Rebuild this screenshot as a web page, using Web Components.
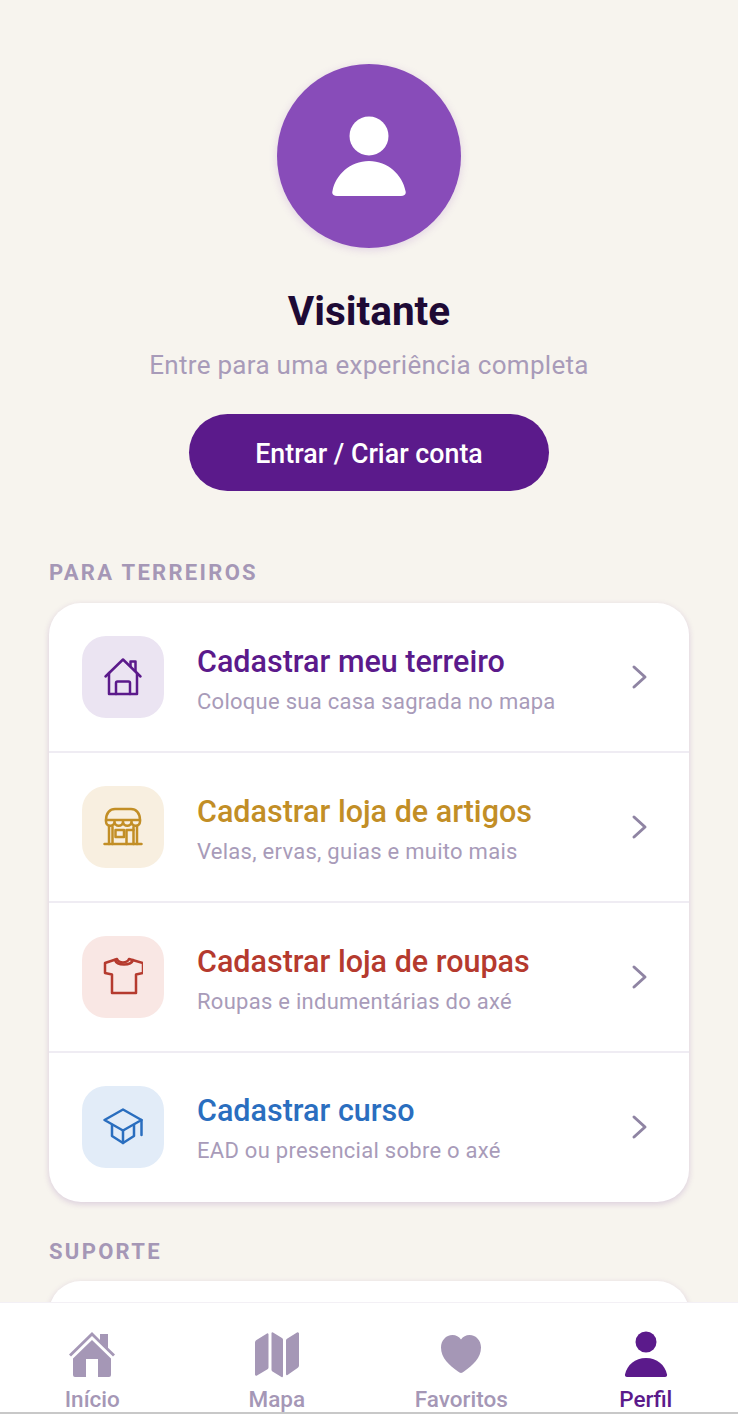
<!DOCTYPE html>
<html lang="pt-BR">
<head>
<meta charset="utf-8">
<title>Perfil</title>
<style>
  html, body { margin: 0; height: 100%; }
  body { font-family: Roboto, "Liberation Sans", sans-serif; background: #f7f4ee; overflow: hidden; }
</style>
</head>
<body>
<profile-screen>
  <profile-hero name="Visitante" hint="Entre para uma experiência completa" action="Entrar / Criar conta"></profile-hero>

  <menu-section label="PARA TERREIROS">
    <menu-row color="#5b1a8b" tint="#ebe4f2" icon="house" title="Cadastrar meu terreiro" sub="Coloque sua casa sagrada no mapa"></menu-row>
    <menu-row color="#c28e26" tint="#f8efe0" icon="store" title="Cadastrar loja de artigos" sub="Velas, ervas, guias e muito mais"></menu-row>
    <menu-row color="#b53a2e" tint="#f9e7e4" icon="shirt" title="Cadastrar loja de roupas" sub="Roupas e indumentárias do axé"></menu-row>
    <menu-row color="#2a6ebf" tint="#e2ecf8" icon="cap" title="Cadastrar curso" sub="EAD ou presencial sobre o axé"></menu-row>
  </menu-section>

  <menu-section label="SUPORTE" class="support">
    <menu-row color="#5b1a8b" tint="#ebe4f2" title="" sub=""></menu-row>
  </menu-section>

  <bottom-nav slot="nav">
    <nav-item icon="home" label="Início"></nav-item>
    <nav-item icon="map" label="Mapa"></nav-item>
    <nav-item icon="heart" label="Favoritos"></nav-item>
    <nav-item icon="person" label="Perfil" active></nav-item>
  </bottom-nav>
</profile-screen>

<script>
const lineIcons = {
  house: `<path d="M2.500 19.500 20 2.500l17.500 17"/><path d="M27.500 9V4.500h5V14"/><path d="M6 16v21h28V16"/><path d="M13 37V26a1.500 1.500 0 0 1 1.500-1.500h11A1.500 1.500 0 0 1 27 26v11"/>`,
  store: `<path d="M1.500 37h37"/><path d="M6 37V19M9.500 37V20M34 37V19M30.500 37V20"/><path d="M3 13C3 6 7 2 12 2h16c5 0 9 4 9 11"/><path d="M3 13v1.500a4.250 4.250 0 0 0 8.500 0 4.250 4.250 0 0 0 8.500 0 4.250 4.250 0 0 0 8.500 0 4.250 4.250 0 0 0 8.500 0V13z"/><path d="M12.500 23h8.500v7h-8.500z"/><path d="M23.500 37V23h7"/>`,
  shirt: `<path d="M14 2 2 6v10l7 1.500V36h24V17.500l7-1.500V6L26 2c-2 4.500-10 4.500-12 0z"/><path d="M12 3c2 6 16 6 18 0"/>`,
  cap: `<path d="M20 2.500 1.500 13 20 23.500 38.500 13z"/><path d="M9 18v11l11 7 11-7V18"/><path d="M20 23.500V36"/><path d="M38.500 13v15"/>`
}

const navIcons = {
  home: `<path d="M24 1 1 23.500l2 2L24 5l21 20.500 2-2-7-6.800V3h-8v6z"/><path d="M24 9 5 27.500V44a2 2 0 0 0 2 2h11V28h12v18h11a2 2 0 0 0 2-2V27.500z"/>`,
  map: `<path d="M2 11.500a3 3 0 0 1 1.500-2.500L14 2.500a1 1 0 0 1 1.500 1v33a2 2 0 0 1-1 1.700L4 44.500a1.300 1.300 0 0 1-2-1.100z"/><path d="M18.500 2a1 1 0 0 1 1.500-.5L29 7a2 2 0 0 1 1 1.700V45a1 1 0 0 1-1.500 1l-9-5.500a2 2 0 0 1-1-1.700z"/><path d="M33 9.500a2 2 0 0 1 1-1.700L44 1.500a1.300 1.300 0 0 1 2 1.100v32a3 3 0 0 1-1.500 2.500L34.500 44a1 1 0 0 1-1.500-1z"/>`,
  heart: `<path d="M24 42c-1 0-2-.6-3-1.400C12 34 4 27 4 16.500 4 9.500 9 4 15.500 4c3.500 0 6.500 1.500 8.500 4.500C26 5.500 29 4 32.500 4 39 4 44 9.500 44 16.500 44 27 36 34 27 40.600c-1 .8-2 1.400-3 1.400z"/>`,
  person: `<circle cx="24" cy="11" r="10.500"/><path d="M5 46c-1.500 0-2.300-1-2-2.500C5 34 13 27 24 27s19 7 21 16.500c.3 1.500-.5 2.500-2 2.500z"/>`
}

class ProfileScreen extends HTMLElement {
  constructor () {
    super()
    this.shadow = this.attachShadow({ mode: 'open' })
  }

  connectedCallback () {
    this.shadow.innerHTML = `
      <style>
        :host { display: flex; flex-direction: column; height: 1414px; }
        .scroll { flex: 1; min-height: 0; overflow: hidden; padding: 64px 49px 0; }
      </style>
      <div class="scroll"><slot></slot></div>
      <slot name="nav"></slot>
    `
  }
}

class ProfileHero extends HTMLElement {
  constructor () {
    super()
    this.shadow = this.attachShadow({ mode: 'open' })
  }

  connectedCallback () {
    this.shadow.innerHTML = `
      <style>
        :host { display: flex; flex-direction: column; align-items: center; }
        .avatar {
          width: 184px; height: 184px; border-radius: 50%; background: #884cb9;
          box-shadow: 0 2px 8px rgba(138, 77, 187, .2);
          display: flex; align-items: center; justify-content: center;
        }
        .avatar svg { width: 74px; height: 80px; display: block; fill: #fff; }
        h1 { margin: 40px 0 0; font-size: 40.500px; line-height: 46px; font-weight: 700; color: #1e0a35; }
        p { margin: 15px 0 0; font-size: 26px; line-height: 32px; color: #a89bb9; letter-spacing: .29px; }
        button {
          margin-top: 33px; width: 360px; height: 77px; border: 0; border-radius: 39px; padding: 2px 0 0;
          background: #5b1a8b; color: #fff; font: 500 26.800px Roboto, sans-serif;
        }
      </style>
      <div class="avatar">
        <svg viewBox="0 0 74 80"><circle cx="37" cy="20" r="19.500"/><path d="M5 80c-3.500 0-5.500-2-4.500-5C3.500 59 18 45 37 45s33.500 14 36.500 30c1 3-1 5-4.500 5z"/></svg>
      </div>
      <h1>${this.getAttribute('name')}</h1>
      <p>${this.getAttribute('hint')}</p>
      <button type="button">${this.getAttribute('action')}</button>
    `
  }
}

class MenuSection extends HTMLElement {
  constructor () {
    super()
    this.shadow = this.attachShadow({ mode: 'open' })
  }

  connectedCallback () {
    this.shadow.innerHTML = `
      <style>
        :host { display: block; margin-top: 69px; }
        :host(.support) { margin-top: 37px; }
        h2 {
          margin: 0 0 17px; font-size: 22px; line-height: 26px; font-weight: 700;
          letter-spacing: 2.300px; color: #a597b6;
        }
        :host(.support) h2 { margin-bottom: 16px; }
        .card {
          background: #fff; border-radius: 32px; overflow: hidden;
          box-shadow: 0 2px 6px rgba(91, 26, 139, .18);
        }
        ::slotted(menu-row:not(:last-child)) { border-bottom: 2px solid #efecf3; }
        ::slotted(menu-row:last-child) { height: 147px; padding-bottom: 2px; }
      </style>
      <h2>${this.getAttribute('label')}</h2>
      <div class="card"><slot></slot></div>
    `
  }
}

class MenuRow extends HTMLElement {
  constructor () {
    super()
    this.shadow = this.attachShadow({ mode: 'open' })
  }

  connectedCallback () {
    const color = this.getAttribute('color')
    const icon = lineIcons[this.getAttribute('icon')]
    this.shadow.innerHTML = `
      <style>
        :host { display: flex; align-items: center; height: 148px; padding: 0 39px 0 33px; gap: 33px; }
        .tile {
          width: 82px; height: 82px; border-radius: 24px; flex: none;
          background: ${this.getAttribute('tint')};
          display: flex; align-items: center; justify-content: center;
        }
        .tile svg { width: 40px; height: 40px; fill: none; stroke: ${color}; stroke-width: 2.500; stroke-linecap: round; stroke-linejoin: round; }
        .text { flex: 1; min-width: 0; padding-top: 5px; }
        .title { font-size: 30.500px; line-height: 36px; font-weight: 500; color: ${color}; }
        .sub { margin-top: 8px; font-size: 22px; line-height: 28px; color: #a89bb9; letter-spacing: .27px; }
        .chev { width: 22px; height: 26px; flex: none; fill: none; stroke: #8f84a3; stroke-width: 3; stroke-linecap: round; stroke-linejoin: round; }
      </style>
      <div class="tile">${icon ? `<svg viewBox="0 0 40 40">${icon}</svg>` : ''}</div>
      <div class="text">
        <div class="title">${this.getAttribute('title')}</div>
        <div class="sub">${this.getAttribute('sub')}</div>
      </div>
      <svg class="chev" viewBox="0 0 22 26"><path d="M6 3l11 10L6 23"/></svg>
    `
  }
}

class BottomNav extends HTMLElement {
  constructor () {
    super()
    this.shadow = this.attachShadow({ mode: 'open' })
  }

  connectedCallback () {
    this.shadow.innerHTML = `
      <style>
        :host {
          display: grid; grid-template-columns: repeat(4, 1fr); flex: none; box-sizing: border-box;
          height: 112px; padding: 28px 0 0; background: #fff; position: relative; z-index: 1;
          border-top: 1px solid #f3f0f5; border-bottom: 2px solid #c8c8c8;
        }
      </style>
      <slot></slot>
    `
  }
}

class NavItem extends HTMLElement {
  constructor () {
    super()
    this.shadow = this.attachShadow({ mode: 'open' })
  }

  connectedCallback () {
    const color = this.hasAttribute('active') ? '#5b1a8b' : '#a597b6'
    this.shadow.innerHTML = `
      <style>
        :host { display: flex; flex-direction: column; align-items: center; }
        svg { width: 48px; height: 48px; display: block; fill: ${color}; }
        span { margin-top: 7px; font-size: 22.500px; line-height: 26px; font-weight: 500; color: ${color}; }
      </style>
      <svg viewBox="0 0 48 48">${navIcons[this.getAttribute('icon')]}</svg>
      <span>${this.getAttribute('label')}</span>
    `
  }
}

customElements.define('profile-screen', ProfileScreen)
customElements.define('profile-hero', ProfileHero)
customElements.define('menu-section', MenuSection)
customElements.define('menu-row', MenuRow)
customElements.define('bottom-nav', BottomNav)
customElements.define('nav-item', NavItem)
</script>
</body>
</html>
